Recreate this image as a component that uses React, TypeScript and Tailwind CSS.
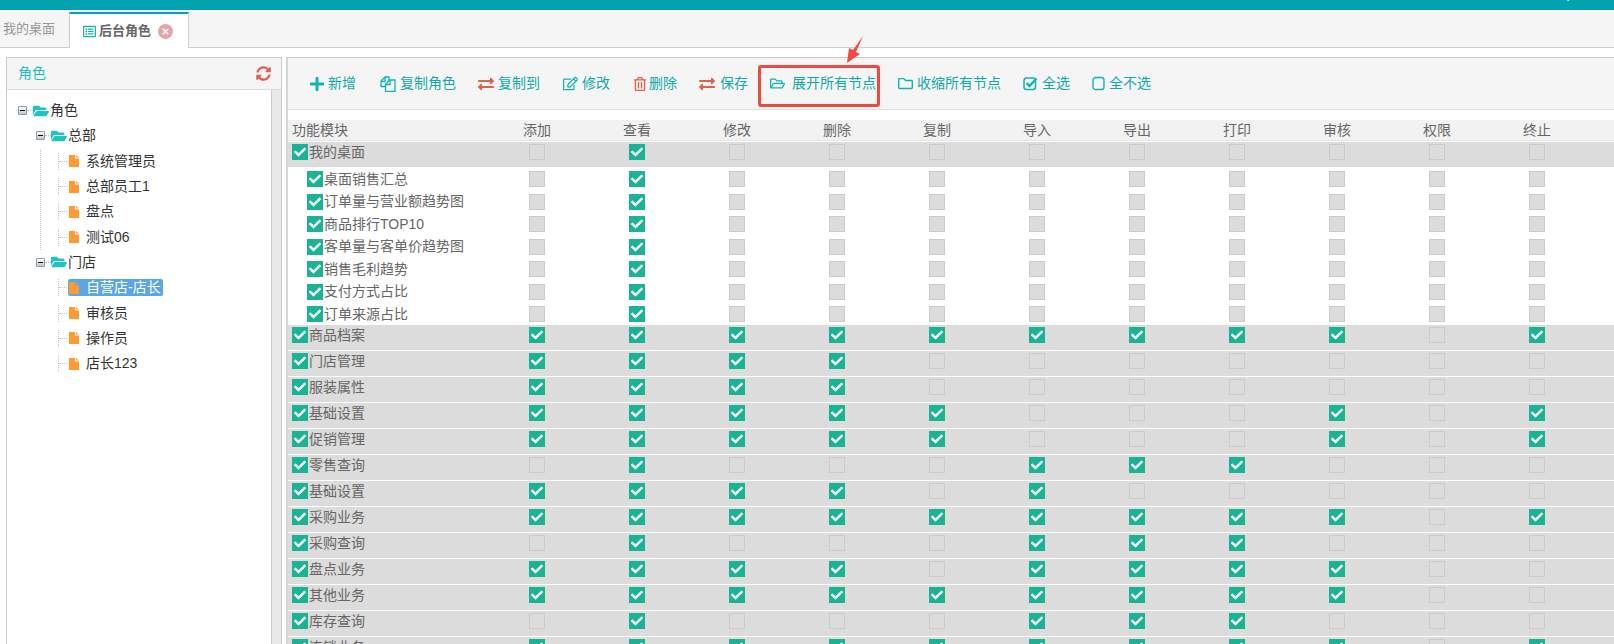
import React from 'react';
import {
  FaCheck,
  FaExchangeAlt,
  FaFolderOpen,
  FaPlus,
  FaRegEdit,
  FaRegFolder,
  FaRegFolderOpen,
  FaRegListAlt,
  FaRegTrashAlt,
  FaSyncAlt,
  FaTimes,
} from 'react-icons/fa';

const columns = ['添加', '查看', '修改', '删除', '复制', '导入', '导出', '打印', '审核', '权限', '终止'];

const viewOnly = '01000000000';
const children = ['桌面销售汇总', '订单量与营业额趋势图', '商品排行TOP10', '客单量与客单价趋势图', '销售毛利趋势', '支付方式占比', '订单来源占比'];

const groups: [string, string][] = [
  ['商品档案', '11111111101'],
  ['门店管理', '11110000000'],
  ['服装属性', '11110000000'],
  ['基础设置', '11111000101'],
  ['促销管理', '11111000101'],
  ['零售查询', '01000111000'],
  ['基础设置', '11110100000'],
  ['采购业务', '11111111101'],
  ['采购查询', '01000111000'],
  ['盘点业务', '11110111100'],
  ['其他业务', '11111111100'],
  ['库存查询', '01000111000'],
  ['连锁业务', '11111111101'],
];

// fa-files-o，包里没有一样的
const CopyIcon = () => (
  <svg width="16" height="16" viewBox="0 0 16 16" fill="none" stroke="#0fb5b5" strokeWidth="1.3">
    <path d="M5.5 10.5H1V5l4-4h4v3" />
    <path d="M1.5 5.5H5V1.5" />
    <path d="M5.5 8.5l4-4.5H15v11.5H5.500z" />
    <path d="M6 8.500h4V4.500" />
  </svg>
);

const CheckSquareIcon = () => (
  <svg width="15" height="15" viewBox="0 0 15 15" fill="none">
    <rect x="1" y="2" width="11.500" height="11.500" rx="2.500" stroke="#0fb5b5" strokeWidth="1.500" />
    <path d="M3.500 7l3 3L13.500 2.500" stroke="#0fb5b5" strokeWidth="2.400" />
  </svg>
);

const SquareIcon = () => (
  <svg width="13" height="15" viewBox="0 0 13 15" fill="none">
    <rect x="1" y="1.500" width="11" height="12" rx="2.500" stroke="#0fb5b5" strokeWidth="1.400" />
  </svg>
);

const toolbar = [
  { icon: <FaPlus className="text-[16px] text-[#0fb5b5]" />, label: '新增', ml: 'ml-[21px]', w: 'w-[19px]' },
  { icon: <CopyIcon />, label: '复制角色', ml: 'ml-[24px]', w: 'w-[20px]' },
  { icon: <FaExchangeAlt className="text-[16px] text-[#e0604c]" />, label: '复制到', ml: 'ml-[22px]', w: 'w-[20px]' },
  { icon: <FaRegEdit className="text-[15px] text-[#0fb5b5]" />, label: '修改', ml: 'ml-[23px]', w: 'w-[19px]' },
  { icon: <FaRegTrashAlt className="text-[14px] text-[#e0604c]" />, label: '删除', ml: 'ml-[23px]', w: 'w-[16px]' },
  { icon: <FaExchangeAlt className="text-[16px] text-[#e0604c]" />, label: '保存', ml: 'ml-[22px]', w: 'w-[21px]' },
  { icon: <FaRegFolderOpen className="text-[15px] text-[#0fb5b5]" />, label: '展开所有节点', ml: 'ml-[22px]', w: 'w-[22px]' },
  { icon: <FaRegFolder className="text-[15px] text-[#0fb5b5]" />, label: '收缩所有节点', ml: 'ml-[22px]', w: 'w-[19px]' },
  { icon: <CheckSquareIcon />, label: '全选', ml: 'ml-[22px]', w: 'w-[19px]' },
  { icon: <SquareIcon />, label: '全不选', ml: 'ml-[22px]', w: 'w-[17px]' },
];

const Check = ({ on }: { on: boolean }) =>
  on ? (
    <span className="flex h-4 w-4 shrink-0 items-center justify-center bg-[#1ab394] text-[12px] text-white">
      <FaCheck />
    </span>
  ) : (
    <span className="h-4 w-4 shrink-0 border border-[#cbcbcb] bg-[#dcdcdc]" />
  );

const Cells = ({ flags }: { flags: string }) => (
  <>
    {flags.split('').map((f, i) => (
      <div key={i} className="flex w-[100px] shrink-0 justify-center">
        <Check on={f === '1'} />
      </div>
    ))}
  </>
);

const Minus = () => (
  <span className="flex h-[9px] w-[9px] shrink-0 items-center justify-center rounded-[1px] border border-[#7f9db9] bg-gradient-to-b from-white to-[#c8c8c0]">
    <span className="h-px w-[5px] bg-black" />
  </span>
);

const FileIcon = () => (
  <svg width="10" height="12" viewBox="0 0 10 12" className="shrink-0">
    <path d="M0 0h6v3.500h4V12H0z" fill="#ff9a33" />
    <path d="M7 0l3 2.600H7z" fill="#ff9a33" />
  </svg>
);

const Leaf = ({ label, active }: { label: string; active?: boolean }) => (
  <div className="flex h-[25.3px] items-center">
    <span className="flex h-[17px] w-[9px] shrink-0 items-center border-l border-dotted border-[#c4c4c4]">
      <span className="w-full border-t border-dotted border-[#c4c4c4]" />
    </span>
    <span className={`ml-px flex h-[17px] items-center rounded-[2px] pl-[1px] pr-[2px] ${active ? 'bg-[#5ba6e8] text-white' : 'text-[#333]'}`}>
      <FileIcon />
      <span className="ml-[7px]">{label}</span>
    </span>
  </div>
);

const FolderTeal = () => <FaFolderOpen className="shrink-0 text-[16px] text-[#1cc5c0]" />;

const Branch = ({ label }: { label: string }) => (
  <div className="flex h-[25.3px] items-center text-[#333]">
    <Minus />
    <span className="w-[6px] border-t border-dotted border-[#c4c4c4]" />
    <FolderTeal />
    <span className="ml-[1px]">{label}</span>
  </div>
);

export default function App() {
  return (
    <div className="h-[644px] w-[1614px] overflow-hidden bg-white text-[14px] font-['Liberation_Sans','Noto_Sans_CJK_SC',sans-serif]">
      {/* 顶部 */}
      <div className="relative h-[10px] overflow-hidden bg-[#00a3af]">
        <span className="absolute -top-[16px] right-[44px] text-[14px] text-white">退出</span>
      </div>

      {/* 标签栏 */}
      <div className="mt-[2px] flex h-[36px] border-b border-[#c8d0d8] bg-[#f5f5f5] text-[13px]">
        <div className="flex w-[69px] items-center pb-[2px] pl-[3px] text-[#999]">我的桌面</div>
        <div className="flex h-[36px] w-[120px] items-center border-x border-t-2 border-x-[#c8d0d8] border-t-[#00a3af] bg-white pl-[13px] font-bold text-[#666]">
          <FaRegListAlt className="text-[13px] text-[#12b5b0]" />
          <span className="ml-[3px]">后台角色</span>
          <span className="ml-[7px] flex h-[15px] w-[15px] items-center justify-center rounded-full bg-[#e8a3a3] text-[9px] text-white">
            <FaTimes />
          </span>
        </div>
      </div>

      <div className="mt-[9px] flex">
        {/* 角色树 */}
        <div className="ml-[6px] flex h-[587px] w-[276px] shrink-0 flex-col border-x border-t border-[#cbcbcb]">
          <div className="flex h-[32px] shrink-0 items-center justify-between border-b border-[#dcdcdc] bg-[#f5f5f5] pl-[11px] pr-[10px] text-[#1cc0bb]">
            <span>角色</span>
            <FaSyncAlt className="text-[15px] text-[#e0604c]" />
          </div>
          <div className="flex min-h-0 flex-1">
            <div className="flex-1 pl-[11px] pt-[8px]">
              <Branch label="角色" />
              <div className="ml-[18px]">
                <Branch label="总部" />
                <div className="ml-[4px] border-l border-dotted border-[#c4c4c4] pl-[17px]">
                  <Leaf label="系统管理员" />
                  <Leaf label="总部员工1" />
                  <Leaf label="盘点" />
                  <Leaf label="测试06" />
                </div>
                <Branch label="门店" />
                <div className="ml-[22px]">
                  <Leaf label="自营店-店长" active />
                  <Leaf label="审核员" />
                  <Leaf label="操作员" />
                  <Leaf label="店长123" />
                </div>
              </div>
            </div>
            <div className="w-[10px] border-l border-[#cbcbcb] bg-[#e8e8e8]" />
          </div>
        </div>

        {/* 权限表 */}
        <div className="relative ml-[4px] min-w-0 flex-1 border-l-2 border-[#d4d4d4]">
          <div className="flex h-[53px] items-center border-y border-t-[#c8c8c8] border-b-[#e0e0e0] bg-[#f5f5f5] text-[#12a9a9]">
            {toolbar.map((t) => (
              <div key={t.label} className={`flex items-center ${t.ml}`}>
                <span className={`flex shrink-0 items-center ${t.w}`}>{t.icon}</span>
                <span>{t.label}</span>
              </div>
            ))}
          </div>

          {/* 红框和箭头 */}
          <div className="absolute left-[470px] top-[8px] h-[42px] w-[122px] rounded-[3px] border-[3px] border-[#f04a40]" />
          <svg width="18" height="30" viewBox="0 0 18 30" className="absolute left-[559px] -top-[21px]">
            <path d="M16 0L9 16l4 2L0 27l2-15 4 2z" fill="#f04a40" />
          </svg>

          <div className="mt-[10px] flex h-[21px] items-center border-b border-[#e4e4e4] bg-[#f2f2f2] text-[#666]">
            <div className="w-[199px] shrink-0 pl-[4px]">功能模块</div>
            {columns.map((c) => (
              <div key={c} className="w-[100px] shrink-0 text-center">
                {c}
              </div>
            ))}
          </div>

          <div className="mt-px flex h-[25px] items-center bg-[#dcdcdc] pb-[5px] text-[#666]">
            <div className="flex w-[199px] shrink-0 items-center gap-[1px] pl-[4px]">
              <Check on />
              <span>我的桌面</span>
            </div>
            <Cells flags={viewOnly} />
          </div>

          <div className="h-[158px] pt-[1px]">
            {children.map((c) => (
              <div key={c} className="flex h-[22.5px] items-center text-[#666]">
                <div className="flex w-[199px] shrink-0 items-center gap-[1px] pl-[19px]">
                  <Check on />
                  <span>{c}</span>
                </div>
                <Cells flags={viewOnly} />
              </div>
            ))}
          </div>

          {groups.map(([name, flags], i) => (
            <div key={i} className="flex h-[26px] items-center border-b border-white bg-[#dcdcdc] pb-[5px] text-[#666]">
              <div className="flex w-[199px] shrink-0 items-center gap-[1px] pl-[4px]">
                <Check on />
                <span>{name}</span>
              </div>
              <Cells flags={flags} />
            </div>
          ))}
        </div>
      </div>
    </div>
  );
}
